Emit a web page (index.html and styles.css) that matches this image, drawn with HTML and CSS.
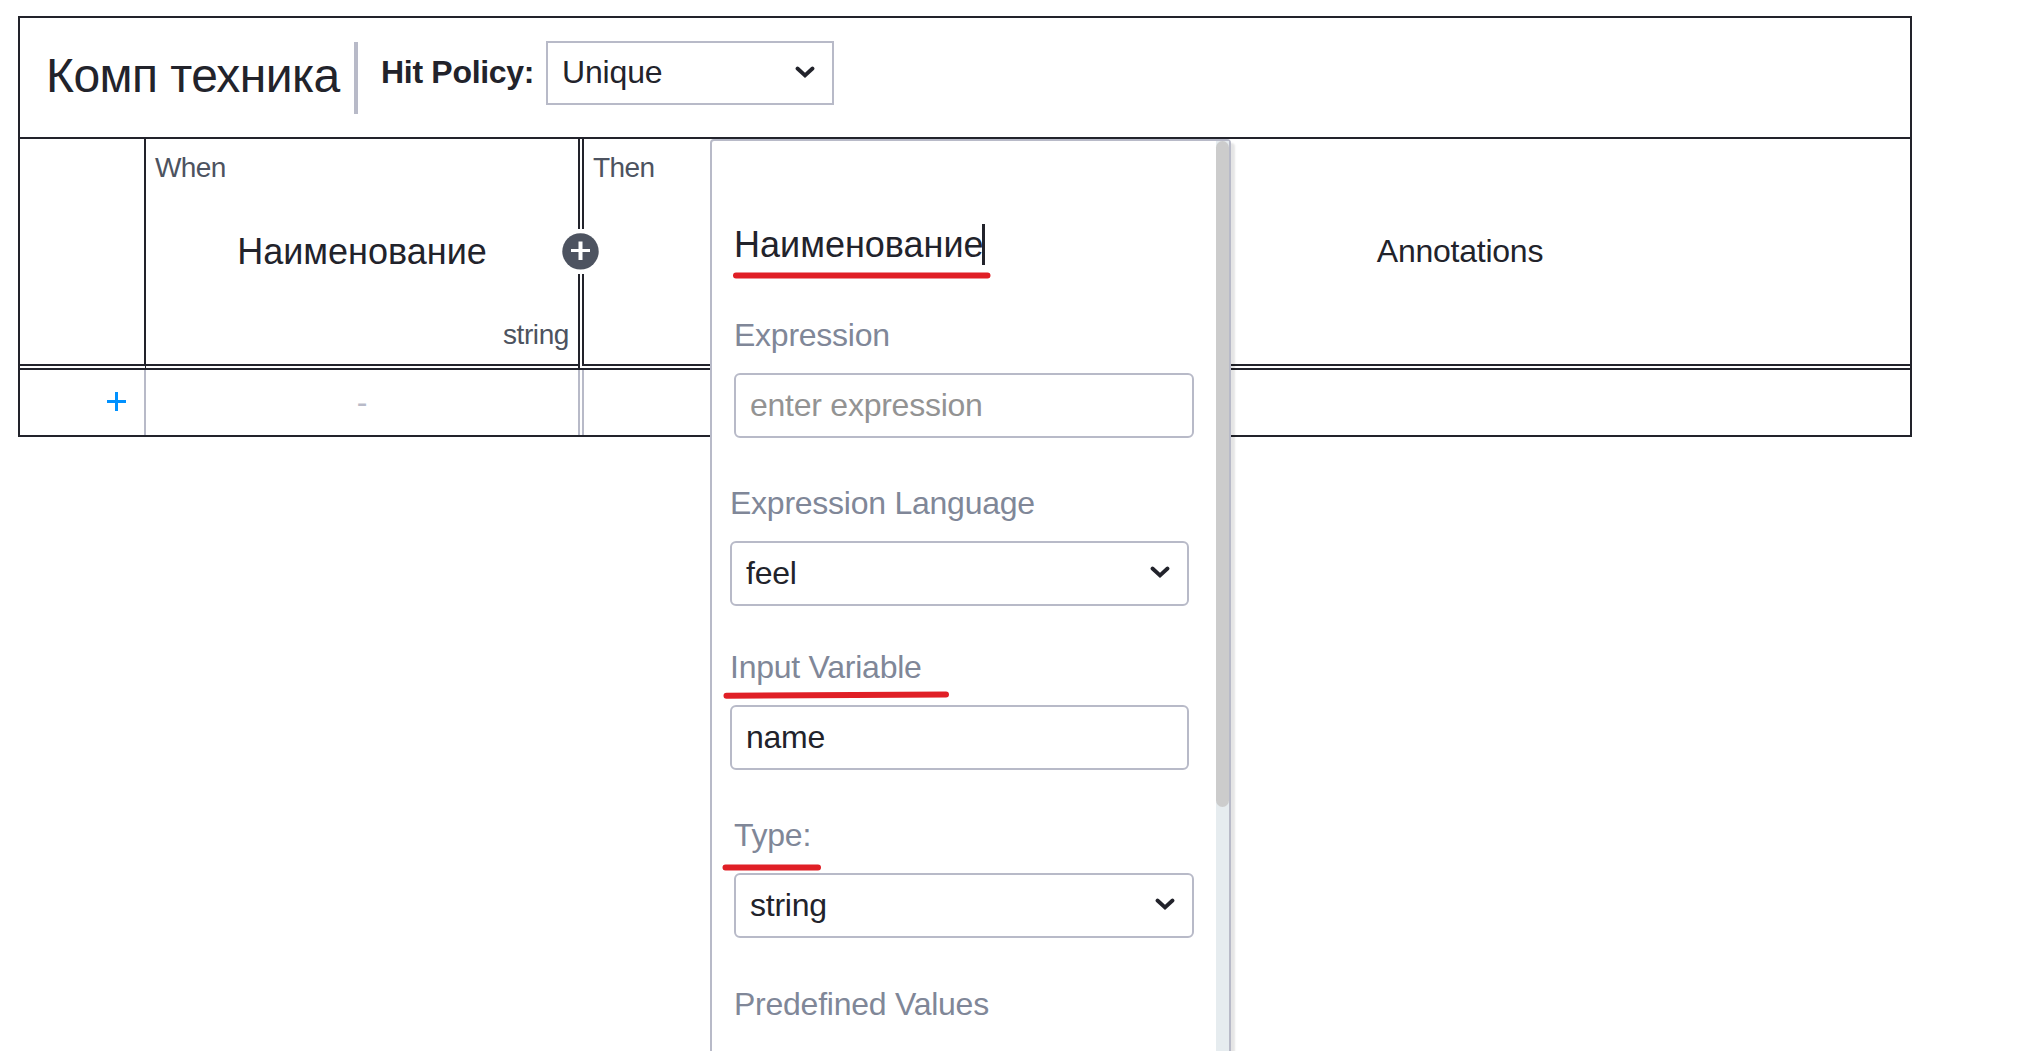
FILE: index.html
```html
<!DOCTYPE html>
<html lang="ru">
<head>
<meta charset="utf-8">
<title>Комп техника</title>
<link rel="stylesheet" href="styles.css">
</head>
<body>
<main class="decision-table">
  <header class="table-header">
    <h1 class="table-name">Комп техника</h1>
    <div class="hit-policy">
      <span class="hit-policy-label">Hit Policy:</span>
      <div class="select hit-policy-select">
        <span>Unique</span>
        <svg class="chevron" viewBox="0 0 20 13"><path d="M2.5 2.5 10 9.5 17.5 2.5"/></svg>
      </div>
    </div>
  </header>
  <section class="row head-row">
    <div class="cell index-cell"></div>
    <div class="cell input-cell">
      <span class="clause">When</span>
      <span class="input-name">Наименование</span>
      <span class="input-type">string</span>
      <div class="add-input"><svg viewBox="0 0 45 45"><path class="halo" d="M18 0h9v45h-9z"/><circle cx="22.5" cy="22.4" r="18.2"/><path class="plus" d="M13 20h19v3H13zM20.5 12.5h4v18.500h-4z"/></svg></div>
    </div>
    <div class="cell output-cell"><span class="clause">Then</span></div>
    <div class="cell annotation-cell">Annotations</div>
  </section>
  <div class="row seam"><i class="seam-index"></i><i class="seam-input"></i></div>
  <section class="row rule-row">
    <div class="cell add-rule"><svg viewBox="0 0 19 19"><path d="M0 8h19v3H0zM8 0h3v19H8z"/></svg></div>
    <div class="cell rule-input">-</div>
    <div class="cell rule-output"></div>
    <div class="cell"></div>
  </section>
</main>

<aside class="popup">
  <div class="popup-body">
    <div class="name-field">Наименование<i class="caret"></i></div>
    <div class="field expression">
      <label>Expression</label>
      <div class="box placeholder">enter expression</div>
    </div>
    <div class="field language shifted">
      <label>Expression Language</label>
      <div class="box select"><span>feel</span><svg class="chevron" viewBox="0 0 20 13"><path d="M2.5 2.500 10 9.500 17.500 2.500"/></svg></div>
    </div>
    <div class="field variable shifted">
      <label>Input Variable</label>
      <div class="box">name</div>
    </div>
    <div class="field type">
      <label>Type:</label>
      <div class="box select"><span>string</span><svg class="chevron" viewBox="0 0 20 13"><path d="M2.5 2.500 10 9.500 17.500 2.500"/></svg></div>
    </div>
    <div class="field values"><label>Predefined Values</label></div>
  </div>
  <div class="scrollbar"><div class="thumb"></div></div>
</aside>

<svg class="marks" viewBox="0 0 2028 1051">
  <path d="M736 275.500H987.500M726.500 695.700 946 694.600M725.500 867.500H818"/>
</svg>
</body>
</html>
```

FILE: styles.css
```css
* { box-sizing: border-box; }

body {
  margin: 0;
  width: 2028px;
  height: 1051px;
  position: relative;
  overflow: hidden;
  padding: 16px 0 0 18px;
  background: #fff;
  color: #22232b;
  font: 32px/40px "Liberation Sans", Arial, sans-serif;
  letter-spacing: -.25px;
}

svg { display: block; }

.decision-table {
  width: 1894px;
  height: 421px;
  border: 2px solid #22232b;
}

.table-header {
  display: flex;
  height: 121px;
  padding: 24px 0 0 26px;
  border-bottom: 2px solid #22232b;
}

.table-name {
  width: 312px;
  height: 72px;
  margin: 0;
  border-right: 4px solid #b8bac8;
  font-size: 48px;
  font-weight: 400;
  letter-spacing: -.55px;
  line-height: 67px;
  white-space: nowrap;
}

.hit-policy {
  display: flex;
  margin: -1px 0 0 23px;
}

.hit-policy-label {
  width: 165px;
  font-weight: 700;
  letter-spacing: -.3px;
  line-height: 62px;
  white-space: nowrap;
}

.select {
  display: flex;
  justify-content: space-between;
}

.hit-policy-select {
  width: 288px;
  height: 64px;
  padding: 0 17px 0 14px;
  border: 2px solid #b8bac8;
  letter-spacing: -.15px;
  line-height: 58px;
}

.chevron {
  width: 20px;
  height: 13px;
  margin-top: 23px;
  fill: none;
  stroke: #22232b;
  stroke-width: 3.8;
  stroke-linecap: round;
}

.row {
  display: grid;
  grid-template-columns: 126px 434px 430px 900px;
}

.head-row { height: 227px; }

.cell { position: relative; }

.head-row .cell { border-bottom: 2px solid #22232b; }

.index-cell { border-right: 2px solid #22232b; }

.input-cell {
  display: flex;
  flex-direction: column;
  padding: 9px 9px 0;
  border-right: 2px solid #22232b;
}

.clause, .input-type {
  display: block;
  color: #4d5360;
  font-size: 28px;
}

.clause { letter-spacing: -.6px; }

.input-name {
  margin-top: 44px;
  font-size: 36px;
  letter-spacing: 0;
  text-align: center;
}

.input-type {
  margin-top: 43px;
  letter-spacing: -.4px;
  text-align: right;
}

.add-input {
  position: absolute;
  z-index: 1;
  top: 90px;
  right: -25px;
  width: 45px;
  height: 45px;
}

.add-input circle { fill: #4d5360; }
.halo, .plus { fill: #fff; }

.output-cell {
  margin-left: 2px;
  padding: 9px 9px 0;
  border-left: 2px solid #22232b;
}

.annotation-cell {
  line-height: 225px;
  text-align: center;
}

.seam { height: 2px; }
.seam-index { border-right: 1px solid #22232b; }
.seam-input { border-right: 2px solid #22232b; }

.rule-row {
  height: 67px;
  border-top: 2px solid #22232b;
}

.add-rule {
  padding: 22px 0 0 87px;
  border-right: 2px solid #b8bac8;
}

.add-rule svg {
  width: 19px;
  height: 19px;
  fill: #0091ff;
}

.rule-input {
  border-right: 2px solid #b8bac8;
  color: #b8bac8;
  line-height: 65px;
  text-align: center;
}

.rule-output {
  margin-left: 2px;
  border-left: 2px solid #b8bac8;
}

.popup {
  position: absolute;
  z-index: 2;
  top: 139px;
  left: 710px;
  display: flex;
  width: 521px;
  height: 940px;
  border: 2px solid #b8bac8;
  border-radius: 4px;
  background: #fff;
  box-shadow: 4px 4px 2px rgba(0, 0, 0, .1);
}

.popup-body {
  width: 504px;
  padding: 83px 22px 0;
}

.name-field {
  display: flex;
  height: 42px;
  font-size: 36px;
  letter-spacing: 0;
  line-height: 42px;
}

.caret {
  width: 3px;
  height: 41px;
  margin-left: -2px;
  background: #22232b;
}

.field {
  display: flex;
  flex-direction: column;
  width: 460px;
}

.field label {
  height: 40px;
  color: #808798;
}

.expression { margin-top: 49px; }
.language { margin-top: 45px; }
.variable { margin-top: 41px; }
.type { margin-top: 45px; }
.values { margin-top: 46px; }

.shifted {
  width: 459px;
  margin-left: -4px;
}

.box {
  height: 65px;
  margin-top: 18px;
  padding: 0 17px 0 14px;
  border: 2px solid #b8bac8;
  border-radius: 6px;
  line-height: 61px;
}

.placeholder { color: #939393; }

.scrollbar {
  width: 13px;
  background: #e6ecef;
}

.thumb {
  height: 666px;
  border-radius: 6.5px;
  background: #ccc;
}

.marks {
  position: absolute;
  z-index: 3;
  inset: 0;
  width: 2028px;
  height: 1051px;
  fill: none;
  stroke: #e01f26;
  stroke-width: 6;
  stroke-linecap: round;
}
```
